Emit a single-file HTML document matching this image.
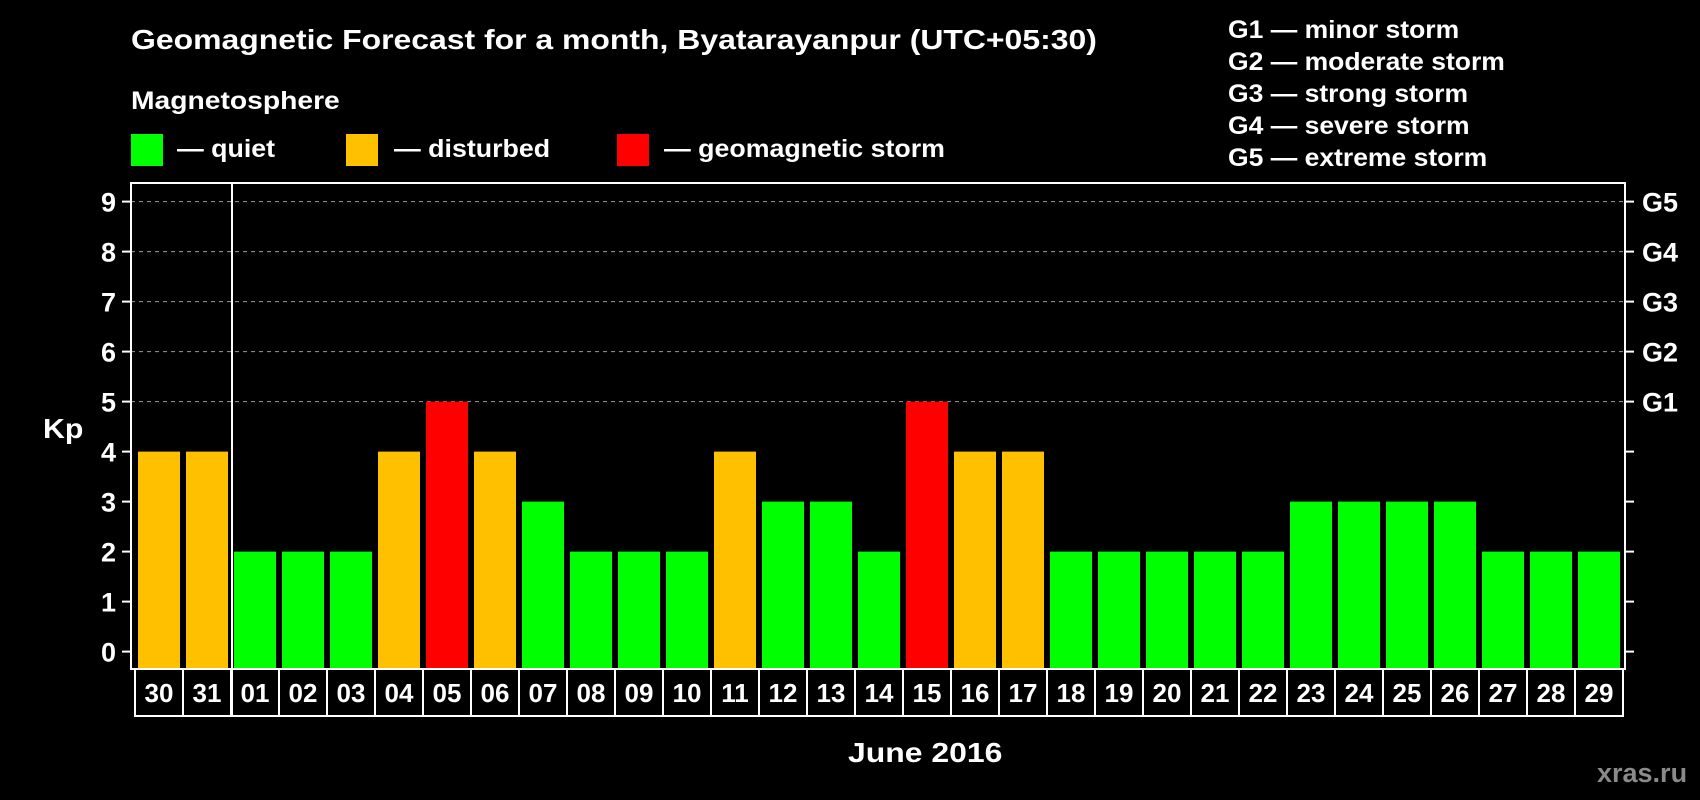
<!DOCTYPE html>
<html><head><meta charset="utf-8"><style>
body{margin:0;width:1700px;height:800px;background:#000;position:relative;overflow:hidden;font-family:"Liberation Sans",Arial,sans-serif;font-weight:bold;color:#fff}
.a{position:absolute;white-space:nowrap;transform-origin:0 50%}
.t{line-height:1}
</style></head><body>
<div class="a t" style="left:131px;top:26px;font-size:28px;transform:scaleX(1.14)">Geomagnetic Forecast for a month, Byatarayanpur (UTC+05:30)</div>
<div class="a t" style="left:131px;top:89px;font-size:25px;transform:scaleX(1.13)">Magnetosphere</div>
<div class="a" style="left:131px;top:134px;width:32px;height:32px;background:#00ff00"></div>
<div class="a t" style="left:177px;top:137px;font-size:25px;transform:scaleX(1.07)">— quiet</div>
<div class="a" style="left:346px;top:134px;width:32px;height:32px;background:#ffc000"></div>
<div class="a t" style="left:394px;top:137px;font-size:25px;transform:scaleX(1.07)">— disturbed</div>
<div class="a" style="left:617px;top:134px;width:32px;height:32px;background:#ff0000"></div>
<div class="a t" style="left:664px;top:137px;font-size:25px;transform:scaleX(1.07)">— geomagnetic storm</div>
<div class="a t" style="left:1228px;top:14px;font-size:25px;line-height:32px;transform:scaleX(1.06);transform-origin:0 0">G1 — minor storm<br>G2 — moderate storm<br>G3 — strong storm<br>G4 — severe storm<br>G5 — extreme storm</div>
<div class="a t" style="left:43px;top:415px;font-size:28px;transform:scaleX(1.08)">Kp</div>
<div class="a t" style="left:848px;top:739px;font-size:28px;transform:scaleX(1.14)">June 2016</div>
<div class="a t" style="left:1597px;top:760px;font-size:27px;color:#8a8a8a">xras.ru</div>
<svg class="a" style="left:0;top:0" width="1700" height="800">
<g id="g"></g>
</svg>
<script>
var s='';var data=[4,4,2,2,2,4,5,4,3,2,2,2,4,3,3,2,5,4,4,2,2,2,2,2,3,3,3,3,2,2,2];
var lab=['30','31'];for(var i=1;i<=29;i++)lab.push((i<10?'0':'')+i);
function Y(v){return 651.6-v*50;}
for(var v=0;v<=9;v++){var y=Y(v);
 if(v>=5)s+='<line x1="131" x2="1625" y1="'+y+'" y2="'+y+'" stroke="#999" stroke-width="1" stroke-dasharray="4,4"/>';
 s+='<line x1="122" x2="131" y1="'+y+'" y2="'+y+'" stroke="#fff" stroke-width="2"/>';
 s+='<line x1="1625" x2="1634" y1="'+y+'" y2="'+y+'" stroke="#fff" stroke-width="2"/>';
 s+='<text x="116" y="'+(y+10)+'" font-size="27" font-weight="bold" fill="#fff" text-anchor="end" font-family="Liberation Sans">'+v+'</text>';
 if(v>=5)s+='<text x="1642" y="'+(y+10)+'" font-size="27" font-weight="bold" fill="#fff" font-family="Liberation Sans">G'+(v-4)+'</text>';
}
var col={2:'#00ff00',3:'#00ff00',4:'#ffc000',5:'#ff0000'};
for(var i=0;i<31;i++){var x=138+i*48;var h=data[i];
 s+='<rect x="'+x+'" y="'+Y(h)+'" width="42" height="'+(669-Y(h))+'" fill="'+col[h]+'"/>';
 var bx=135+i*48;
 s+='<rect x="'+bx+'" y="669" width="48" height="47" fill="none" stroke="#fff" stroke-width="2"/>';
 s+='<text x="'+(bx+24)+'" y="702" font-size="26" font-weight="bold" fill="#fff" text-anchor="middle" font-family="Liberation Sans">'+lab[i]+'</text>';
}
s+='<rect x="131" y="183" width="1494" height="486" fill="none" stroke="#fff" stroke-width="2"/>';
s+='<line x1="232" x2="232" y1="183" y2="716" stroke="#fff" stroke-width="2"/>';
document.getElementById('g').innerHTML=s;
</script>
</body></html>
